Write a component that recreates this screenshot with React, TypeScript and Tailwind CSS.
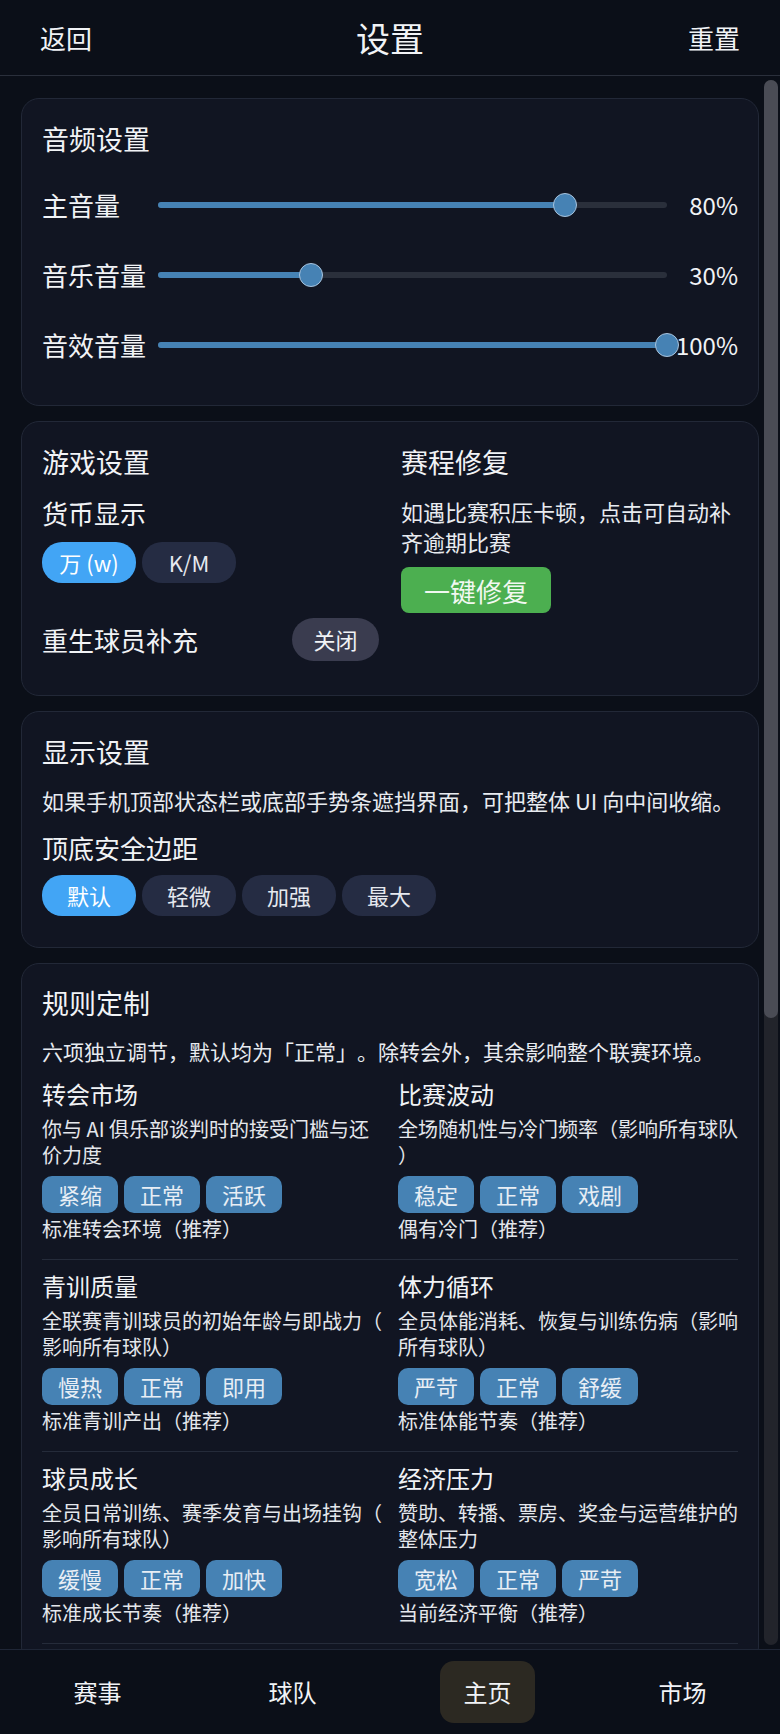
import React from "react";

const volumes = [
  { label: "主音量", value: 80 },
  { label: "音乐音量", value: 30 },
  { label: "音效音量", value: 100 },
];

const rules = [
  [
    {
      title: "转会市场",
      desc: "你与 AI 俱乐部谈判时的接受门槛与还价力度",
      options: ["紧缩", "正常", "活跃"],
      note: "标准转会环境（推荐）",
    },
    {
      title: "比赛波动",
      desc: "全场随机性与冷门频率（影响所有球队）",
      options: ["稳定", "正常", "戏剧"],
      note: "偶有冷门（推荐）",
    },
  ],
  [
    {
      title: "青训质量",
      desc: "全联赛青训球员的初始年龄与即战力（影响所有球队）",
      options: ["慢热", "正常", "即用"],
      note: "标准青训产出（推荐）",
    },
    {
      title: "体力循环",
      desc: "全员体能消耗、恢复与训练伤病（影响所有球队）",
      options: ["严苛", "正常", "舒缓"],
      note: "标准体能节奏（推荐）",
    },
  ],
  [
    {
      title: "球员成长",
      desc: "全员日常训练、赛季发育与出场挂钩（影响所有球队）",
      options: ["缓慢", "正常", "加快"],
      note: "标准成长节奏（推荐）",
    },
    {
      title: "经济压力",
      desc: "赞助、转播、票房、奖金与运营维护的整体压力",
      options: ["宽松", "正常", "严苛"],
      note: "当前经济平衡（推荐）",
    },
  ],
];

function VolumeRow({ label, value }: { label: string; value: number }) {
  return (
    <div className="flex h-[70px] items-center">
      <div className="w-[116px] text-[26px] leading-[36px]">{label}</div>
      <div className="relative h-[6px] flex-1 rounded-full bg-[#2a2f3b]">
        <div className="h-full rounded-full bg-[#4682b4]" style={{ width: `${value}%` }} />
        <div
          className="absolute top-1/2 h-[24px] w-[24px] -translate-x-1/2 -translate-y-1/2 rounded-full border border-[#a8c3dd] bg-[#4682b4]"
          style={{ left: `${value}%` }}
        />
      </div>
      <div className="w-[71px] text-right text-[24px] leading-[34px]">{value}%</div>
    </div>
  );
}

function Pill({ text, active }: { text: string; active?: boolean }) {
  return (
    <div
      className={
        active
          ? "flex h-[41px] w-[94px] items-center justify-center rounded-[20px] bg-[#42a5f5] text-[22px] text-white"
          : "flex h-[41px] w-[94px] items-center justify-center rounded-[20px] bg-[#252c43] text-[22px] text-[#e6e9ef]"
      }
    >
      {text}
    </div>
  );
}

function RuleItem({ item }: { item: (typeof rules)[number][number] }) {
  return (
    <div>
      <div className="text-[24px] leading-[34px]">{item.title}</div>
      <div className="mt-[5px] text-[20px] leading-[26px] text-[#e4e7ec] [line-break:anywhere]">{item.desc}</div>
      <div className="mt-[8px] flex gap-[6px]">
        {item.options.map((o) => (
          <div
            key={o}
            className="flex h-[37px] w-[76px] items-center justify-center rounded-[10px] bg-[#4682b4] text-[22px] text-[#e8eef5]"
          >
            {o}
          </div>
        ))}
      </div>
      <div className="mt-[2px] text-[20px] leading-[28px] text-[#e4e7ec]">{item.note}</div>
    </div>
  );
}

export default function App() {
  const tabs = ["赛事", "球队", "主页", "市场"];
  return (
    <div className="flex h-[1734px] w-[780px] flex-col overflow-hidden bg-[#0b0f18] font-['Noto_Sans_CJK_SC','Noto_Sans',sans-serif] text-[#f1f3f6] [text-spacing-trim:space-all]">
      {/* header */}
      <div className="flex h-[76px] shrink-0 items-center justify-between border-b border-[#2a2f3b] px-[40px]">
        <span className="text-[26px]">返回</span>
        <span className="text-[34px]">设置</span>
        <span className="text-[26px]">重置</span>
      </div>

      <div className="flex min-h-0 flex-1">
        <div className="flex flex-1 flex-col gap-[15px] overflow-hidden pl-[21px] pr-[5px] pt-[22px]">
          {/* audio */}
          <div className="shrink-0 rounded-[18px] border border-[#222837] bg-[#111522] px-5 pb-[25px] pt-5">
            <div className="h-[40px] text-[27px] leading-[40px]">音频设置</div>
            <div className="mt-[11px]">
              {volumes.map((v) => (
                <VolumeRow key={v.label} label={v.label} value={v.value} />
              ))}
            </div>
          </div>

          {/* game */}
          <div className="grid shrink-0 grid-cols-2 gap-x-[22px] rounded-[18px] border border-[#222837] bg-[#111522] px-5 pb-[34px] pt-5">
            <div>
              <div className="h-[40px] text-[27px] leading-[40px]">游戏设置</div>
              <div className="mt-[13px] text-[26px] leading-[36px]">货币显示</div>
              <div className="mt-[11px] flex gap-[6px]">
                <Pill text="万 (w)" active />
                <Pill text="K/M" />
              </div>
              <div className="mt-[35px] flex items-center justify-between">
                <span className="text-[26px] leading-[36px]">重生球员补充</span>
                <div className="flex h-[43px] w-[87px] items-center justify-center rounded-full bg-[#3a3c4f] text-[22px]">
                  关闭
                </div>
              </div>
            </div>
            <div>
              <div className="h-[40px] text-[27px] leading-[40px]">赛程修复</div>
              <div className="mt-[14px] text-[22px] leading-[30px] text-[#e8ebf0]">
                如遇比赛积压卡顿，点击可自动补齐逾期比赛
              </div>
              <div className="mt-[11px] flex h-[46px] w-[150px] items-center justify-center rounded-[8px] bg-[#4caf50] text-[26px] text-[#f1f8f1]">
                一键修复
              </div>
            </div>
          </div>

          {/* display */}
          <div className="shrink-0 rounded-[18px] border border-[#222837] bg-[#111522] px-5 pb-[31px] pt-5">
            <div className="h-[40px] text-[27px] leading-[40px]">显示设置</div>
            <div className="mt-[13px] text-[22px] leading-[30px] text-[#e8ebf0]">
              如果手机顶部状态栏或底部手势条遮挡界面，可把整体 UI 向中间收缩。
            </div>
            <div className="mt-[15px] text-[26px] leading-[36px]">顶底安全边距</div>
            <div className="mt-[9px] flex gap-[6px]">
              <Pill text="默认" active />
              <Pill text="轻微" />
              <Pill text="加强" />
              <Pill text="最大" />
            </div>
          </div>

          {/* rules */}
          <div className="shrink-0 rounded-[18px] border border-[#222837] bg-[#111522] px-5 pb-5 pt-5">
            <div className="h-[38px] text-[27px] leading-[38px]">规则定制</div>
            <div className="mt-[14px] text-[21px] leading-[30px] text-[#e8ebf0]">
              六项独立调节，默认均为「正常」。除转会外，其余影响整个联赛环境。
            </div>
            <div className="mt-[11px]">
              {rules.map((row, i) => (
                <div key={i}>
                  {i > 0 && <div className="h-[9px]" />}
                  <div className="grid grid-cols-2 gap-x-[16px]">
                    <RuleItem item={row[0]} />
                    <RuleItem item={row[1]} />
                  </div>
                  <div className="mt-[16px] h-px bg-[#252b3a]" />
                </div>
              ))}
            </div>
          </div>
        </div>

        {/* scrollbar */}
        <div className="mr-[2px] flex w-[14px] shrink-0 py-[4px]">
          <div className="flex-1 rounded-full bg-[#22242b]">
            <div className="h-[938px] rounded-full bg-[#4a4c55]" />
          </div>
        </div>
      </div>

      {/* bottom nav */}
      <div className="grid h-[85px] shrink-0 grid-cols-4 border-t border-[#1f2636] bg-[#0b0f18]">
        {tabs.map((t) => (
          <div key={t} className="flex items-center justify-center">
            <div
              className={
                t === "主页"
                  ? "flex h-[62px] w-[95px] items-center justify-center rounded-[14px] bg-[#2c2922] text-[24px]"
                  : "flex h-[62px] w-[95px] items-center justify-center text-[24px]"
              }
            >
              {t}
            </div>
          </div>
        ))}
      </div>
    </div>
  );
}
